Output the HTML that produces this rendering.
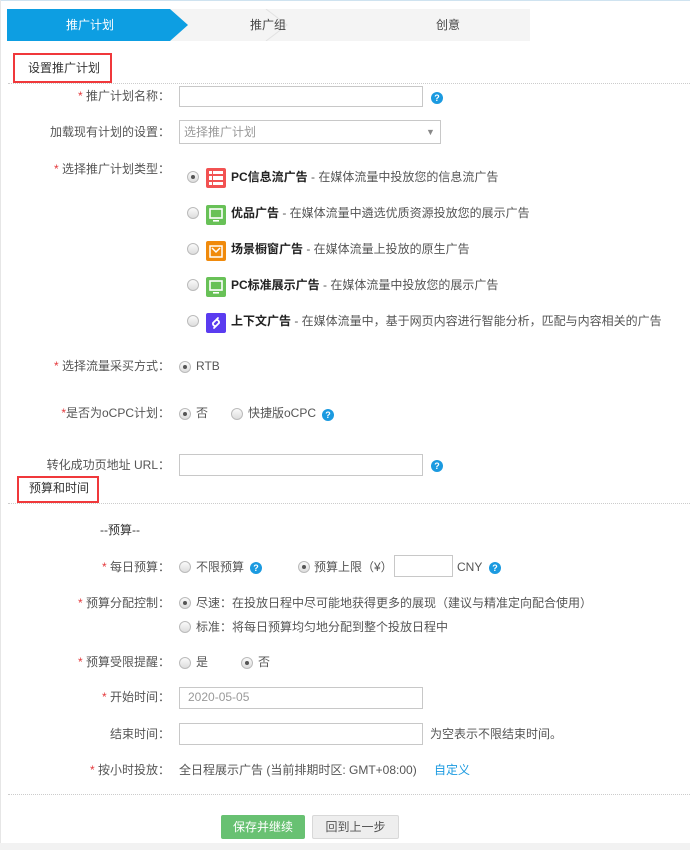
<!DOCTYPE html>
<html><head><meta charset="utf-8"><style>
*{margin:0;padding:0;box-sizing:border-box}
body{width:690px;height:850px;position:relative;background:#fff;font-family:"Liberation Sans","Noto Sans CJK SC",sans-serif;font-size:12px;color:#555;overflow:hidden}
.a{position:absolute;line-height:16px;white-space:nowrap}
.r{text-align:right;width:170px;left:0}
.s{color:#e4393c}
.inp{position:absolute;border:1px solid #c8c8c8;background:#fff}
.q{position:absolute;width:12px;height:12px;border-radius:50%;background:#1b9ae0;color:#fff;font-size:9px;line-height:12px;text-align:center;font-weight:bold}
.rd{position:absolute;width:12px;height:12px;border-radius:50%;border:1px solid #bbb;background:linear-gradient(#fafafa,#ddd)}
.rd.on::after{content:"";position:absolute;left:3px;top:3px;width:4px;height:4px;border-radius:50%;background:#555}
.ic{position:absolute;width:20px;height:20px;border-radius:2px}
.b{color:#222;font-weight:bold}
.dot{position:absolute;left:8px;right:0;border-top:1px dotted #ccc}
</style></head><body>
<div style="position:absolute;left:0;top:0;width:690px;height:1px;background:#cfe3f0"></div>
<div style="position:absolute;left:0;top:0;width:1px;height:843px;background:#e6e6e6"></div>
<div style="position:absolute;left:0;top:843px;width:690px;height:7px;background:#f2f2f2"></div>
<!-- tabs -->
<div style="position:absolute;left:7px;top:9px;width:523px;height:32px;background:#f4f4f4"></div>
<svg style="position:absolute;left:7px;top:9px" width="523" height="32">
<polygon points="0,0 163,0 181,16 163,32 0,32" fill="#0d9ee2"/>
<polyline points="259,0 280,16 259,32" fill="none" stroke="#e2e2e2"/>
</svg>
<div class="a" style="left:66px;top:17px;color:#fff">推广计划</div>
<div class="a" style="left:250px;top:17px;color:#444">推广组</div>
<div class="a" style="left:436px;top:17px;color:#444">创意</div>
<div style="position:absolute;left:13px;top:53px;width:99px;height:30px;border:2px solid #f0383b"></div>
<div class="a" style="left:28px;top:60px;color:#333">设置推广计划</div>
<div class="dot" style="top:83px"></div>
<div class="a r" style="top:88px"><span class="s">* </span>推广计划名称：</div>
<div class="inp" style="left:179px;top:86px;width:244px;height:21px"></div>
<div class="q" style="left:431px;top:92px">?</div>
<div class="a r" style="top:124px">加载现有计划的设置：</div>
<div class="inp" style="left:179px;top:120px;width:262px;height:24px"></div>
<div class="a" style="left:184px;top:124px;color:#999">选择推广计划</div>
<div class="a" style="left:426px;top:124px;color:#888;font-size:9px">▼</div>
<div class="a r" style="top:161px"><span class="s">* </span>选择推广计划类型：</div>
<div class="rd on" style="left:187px;top:171px"></div>
<div class="ic" style="left:206px;top:168px;background:#f25252"><svg width="20" height="20"><g fill="#fff"><rect x="3" y="3" width="3" height="3"/><rect x="7" y="3" width="10" height="3"/><rect x="3" y="8" width="3" height="4"/><rect x="7" y="8" width="10" height="4"/><rect x="3" y="14" width="3" height="3"/><rect x="7" y="14" width="10" height="3"/></g></svg></div>
<div class="a" style="left:231px;top:169px"><span class="b">PC信息流广告</span> - 在媒体流量中投放您的信息流广告</div>
<div class="rd" style="left:187px;top:207px"></div>
<div class="ic" style="left:206px;top:205px;background:#68c157"><svg width="20" height="20"><rect x="4" y="4" width="12" height="9" fill="none" stroke="#fff" stroke-width="1.6"/><rect x="7" y="15" width="6" height="1.6" fill="#fff"/></svg></div>
<div class="a" style="left:231px;top:205px"><span class="b">优品广告</span> - 在媒体流量中遴选优质资源投放您的展示广告</div>
<div class="rd" style="left:187px;top:243px"></div>
<div class="ic" style="left:206px;top:241px;background:#f08a0c"><svg width="20" height="20"><rect x="4" y="5" width="12" height="11" fill="none" stroke="#fff" stroke-width="1.5"/><polyline points="6,7 10,11 14,7" fill="none" stroke="#fff" stroke-width="1.5"/></svg></div>
<div class="a" style="left:231px;top:241px"><span class="b">场景橱窗广告</span> - 在媒体流量上投放的原生广告</div>
<div class="rd" style="left:187px;top:279px"></div>
<div class="ic" style="left:206px;top:277px;background:#68c157"><svg width="20" height="20"><rect x="4" y="4" width="12" height="9" fill="none" stroke="#fff" stroke-width="1.6"/><rect x="7" y="15" width="6" height="1.6" fill="#fff"/></svg></div>
<div class="a" style="left:231px;top:277px"><span class="b">PC标准展示广告</span> - 在媒体流量中投放您的展示广告</div>
<div class="rd" style="left:187px;top:315px"></div>
<div class="ic" style="left:206px;top:313px;background:#5a3cf0"><svg width="20" height="20"><path d="M12 5 L7 10 A2.5 2.5 0 0 0 10 13 M8 15 L13 10 A2.5 2.5 0 0 0 10 7" fill="none" stroke="#fff" stroke-width="1.8" stroke-linecap="round"/></svg></div>
<div class="a" style="left:231px;top:313px"><span class="b">上下文广告</span> - 在媒体流量中，基于网页内容进行智能分析，匹配与内容相关的广告</div>
<div class="a r" style="top:358px"><span class="s">* </span>选择流量采买方式：</div>
<div class="rd on" style="left:179px;top:361px"></div>
<div class="a" style="left:196px;top:358px">RTB</div>
<div class="a r" style="top:405px"><span class="s">*</span>是否为oCPC计划：</div>
<div class="rd on" style="left:179px;top:408px"></div>
<div class="a" style="left:196px;top:405px">否</div>
<div class="rd" style="left:231px;top:408px"></div>
<div class="a" style="left:248px;top:405px">快捷版oCPC</div>
<div class="q" style="left:322px;top:409px">?</div>
<div class="a r" style="top:457px">转化成功页地址 URL：</div>
<div class="inp" style="left:179px;top:454px;width:244px;height:22px"></div>
<div class="q" style="left:431px;top:460px">?</div>
<div style="position:absolute;left:17px;top:476px;width:82px;height:27px;border:2px solid #f0383b"></div>
<div class="a" style="left:29px;top:480px;color:#333">预算和时间</div>
<div class="dot" style="top:503px"></div>
<div class="a" style="left:100px;top:522px;color:#333">--预算--</div>
<div class="a r" style="top:559px"><span class="s">* </span>每日预算：</div>
<div class="rd" style="left:179px;top:561px"></div>
<div class="a" style="left:196px;top:559px">不限预算</div>
<div class="q" style="left:250px;top:562px">?</div>
<div class="rd on" style="left:298px;top:561px"></div>
<div class="a" style="left:314px;top:559px">预算上限（¥）</div>
<div class="inp" style="left:394px;top:555px;width:59px;height:22px"></div>
<div class="a" style="left:457px;top:559px">CNY</div>
<div class="q" style="left:489px;top:562px">?</div>
<div class="a r" style="top:595px"><span class="s">* </span>预算分配控制：</div>
<div class="rd on" style="left:179px;top:597px"></div>
<div class="a" style="left:196px;top:595px">尽速：在投放日程中尽可能地获得更多的展现（建议与精准定向配合使用）</div>
<div class="rd" style="left:179px;top:621px"></div>
<div class="a" style="left:196px;top:619px">标准：将每日预算均匀地分配到整个投放日程中</div>
<div class="a r" style="top:654px"><span class="s">* </span>预算受限提醒：</div>
<div class="rd" style="left:179px;top:657px"></div>
<div class="a" style="left:196px;top:654px">是</div>
<div class="rd on" style="left:241px;top:657px"></div>
<div class="a" style="left:258px;top:654px">否</div>
<div class="a r" style="top:689px"><span class="s">* </span>开始时间：</div>
<div class="inp" style="left:179px;top:687px;width:244px;height:22px"></div>
<div class="a" style="left:188px;top:689px;color:#999">2020-05-05</div>
<div class="a r" style="top:726px">结束时间：</div>
<div class="inp" style="left:179px;top:723px;width:244px;height:22px"></div>
<div class="a" style="left:430px;top:726px">为空表示不限结束时间。</div>
<div class="a r" style="top:762px"><span class="s">* </span>按小时投放：</div>
<div class="a" style="left:179px;top:762px">全日程展示广告 (当前排期时区: GMT+08:00)</div>
<div class="a" style="left:434px;top:762px;color:#1b9ae0">自定义</div>
<div class="dot" style="top:794px"></div>
<div style="position:absolute;left:221px;top:815px;width:84px;height:24px;background:#68c172;border-radius:2px;color:#fff;text-align:center;line-height:24px">保存并继续</div>
<div style="position:absolute;left:312px;top:815px;width:87px;height:24px;background:#eee;border:1px solid #d8d8d8;border-radius:2px;color:#555;text-align:center;line-height:22px">回到上一步</div>
</body></html>
